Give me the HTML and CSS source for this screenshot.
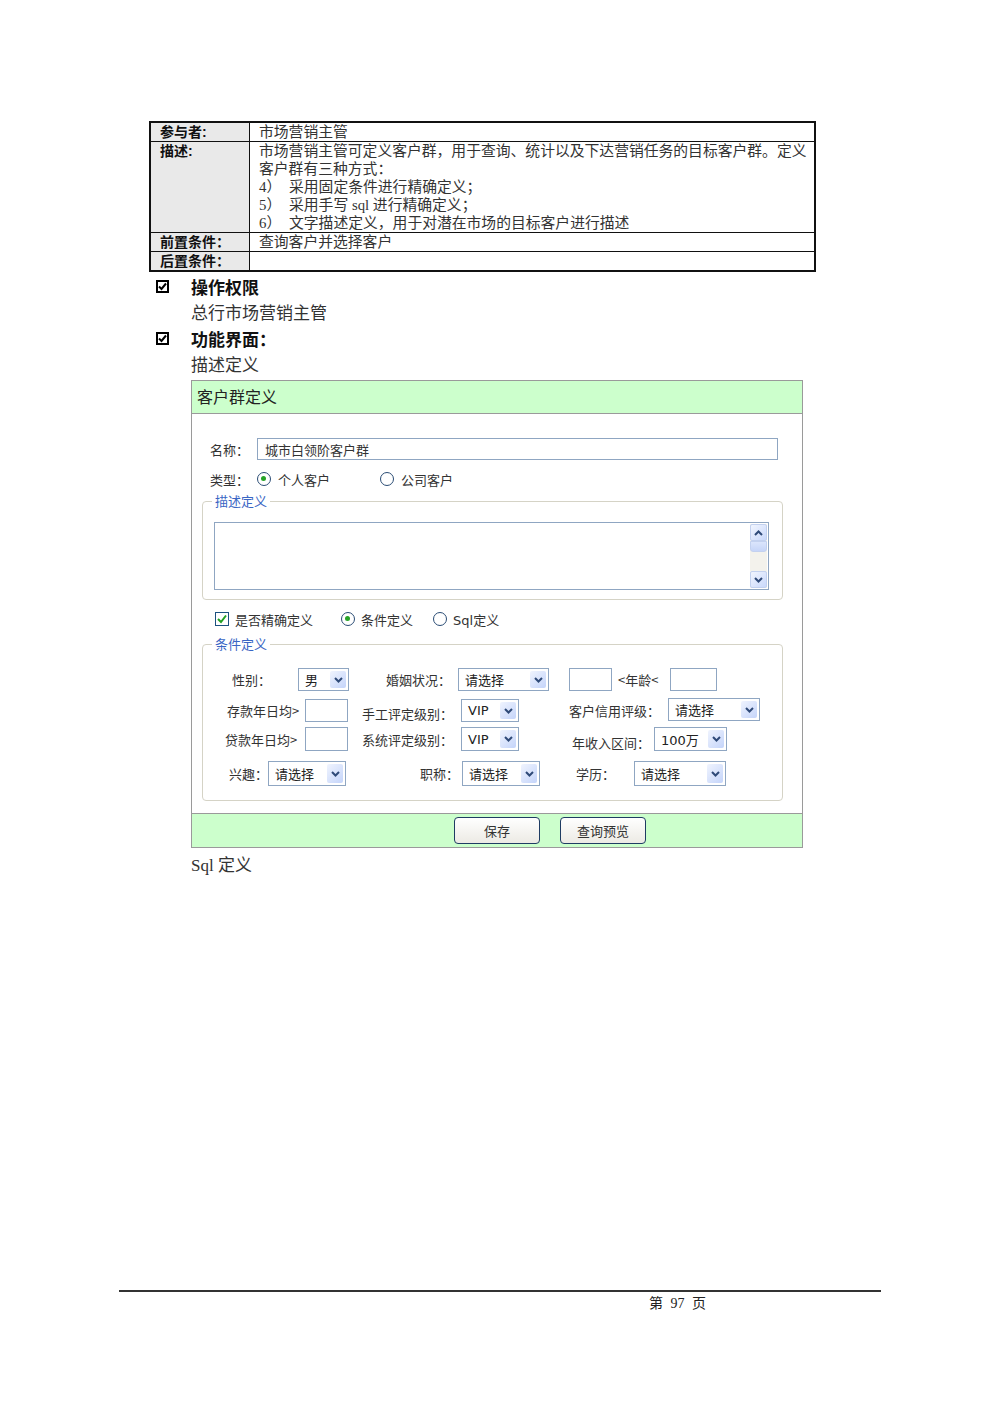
FILE: index.html
```html
<!DOCTYPE html>
<html lang="zh-CN">
<head>
<meta charset="utf-8">
<title>客户群定义</title>
<link rel="stylesheet" href="styles.css">
</head>
<body>
<div class="sheet">
  <main class="content">
    <table class="usecase">
      <colgroup><col class="col-label"><col></colgroup>
      <tr><th>参与者:</th><td>市场营销主管</td></tr>
      <tr><th>描述:</th><td>
        <div>市场营销主管可定义客户群，用于查询、统计以及下达营销任务的目标客户群。定义</div>
        <div>客户群有三种方式：</div>
        <div><span class="num">4）</span>采用固定条件进行精确定义；</div>
        <div><span class="num">5）</span>采用手写 sql 进行精确定义；</div>
        <div><span class="num">6）</span>文字描述定义，用于对潜在市场的目标客户进行描述</div>
      </td></tr>
      <tr><th>前置条件：</th><td>查询客户并选择客户</td></tr>
      <tr><th>后置条件：</th><td></td></tr>
    </table>

    <div class="item first"><svg class="tick" viewBox="0 0 13 13" width="13" height="13"><rect x="1" y="1" width="11" height="11" fill="none" stroke="#000" stroke-width="2"/><path d="M3 6.5 L5.5 9 L10 3.5" fill="none" stroke="#000" stroke-width="2"/></svg><span>操作权限</span></div>
    <p class="para">总行市场营销主管</p>
    <div class="item"><svg class="tick" viewBox="0 0 13 13" width="13" height="13"><rect x="1" y="1" width="11" height="11" fill="none" stroke="#000" stroke-width="2"/><path d="M3 6.5 L5.5 9 L10 3.5" fill="none" stroke="#000" stroke-width="2"/></svg><span>功能界面：</span></div>
    <p class="para">描述定义</p>

    <section class="panel">
      <header class="panel-head">客户群定义</header>
      <div class="panel-body">
        <div class="frow name-row"><span class="flabel">名称：</span><div class="tbox name-input">城市白领阶客户群</div></div>
        <div class="frow type-row"><span class="flabel">类型：</span><span class="radio on"></span><span>个人客户</span><span class="radio gap-opt"></span><span>公司客户</span></div>

        <fieldset class="group desc">
          <legend>描述定义</legend>
          <div class="desc-body">
            <div class="textarea">
              <div class="vscroll">
                <span class="sb-btn"><svg viewBox="0 0 9 6" width="9" height="6"><path d="M1 5 L4.5 1.5 L8 5" fill="none" stroke="#2f4a78" stroke-width="2"/></svg></span>
                <span class="sb-thumb"></span>
                <span class="sb-track"></span>
                <span class="sb-btn"><svg viewBox="0 0 9 6" width="9" height="6"><path d="M1 1 L4.5 4.5 L8 1" fill="none" stroke="#2f4a78" stroke-width="2"/></svg></span>
              </div>
            </div>
          </div>
        </fieldset>

        <div class="frow mode-row">
          <span class="chk"><svg viewBox="0 0 12 12" width="12" height="12"><path d="M2 6 L5 9 L10 2.5" fill="none" stroke="#22a022" stroke-width="2"/></svg></span><span>是否精确定义</span>
          <span class="radio on opt-cond"></span><span>条件定义</span>
          <span class="radio opt-sql"></span><span><span class="latin">Sql</span>定义</span>
        </div>

        <fieldset class="group cond">
          <legend>条件定义</legend>
          <div class="cond-body">
            <div class="crow r1">
              <span class="cl lab-gender">性别：</span>
              <div class="sel w51"><span>男</span><span class="arr"><svg viewBox="0 0 9 6" width="9" height="6"><path d="M1 1 L4.5 4.5 L8 1" fill="none" stroke="#2f4a78" stroke-width="2"/></svg></span></div>
              <span class="cl lab-marital">婚姻状况：</span>
              <div class="sel w91"><span>请选择</span><span class="arr"><svg viewBox="0 0 9 6" width="9" height="6"><path d="M1 1 L4.5 4.5 L8 1" fill="none" stroke="#2f4a78" stroke-width="2"/></svg></span></div>
              <div class="box w43 age-from"></div>
              <span class="cl lab-age">&lt;年龄&lt;</span>
              <div class="box w47"></div>
            </div>
            <div class="crow r2">
              <span class="cl lab-deposit">存款年日均&gt;</span>
              <div class="box w43"></div>
              <span class="cl lab-level lower">手工评定级别：</span>
              <div class="sel w58"><span class="latin">VIP</span><span class="arr"><svg viewBox="0 0 9 6" width="9" height="6"><path d="M1 1 L4.5 4.5 L8 1" fill="none" stroke="#2f4a78" stroke-width="2"/></svg></span></div>
              <span class="cl lab-credit">客户信用评级：</span>
              <div class="sel w92 raise"><span>请选择</span><span class="arr"><svg viewBox="0 0 9 6" width="9" height="6"><path d="M1 1 L4.5 4.5 L8 1" fill="none" stroke="#2f4a78" stroke-width="2"/></svg></span></div>
            </div>
            <div class="crow r3">
              <span class="cl lab-loan">贷款年日均&gt;</span>
              <div class="box w43"></div>
              <span class="cl lab-level">系统评定级别：</span>
              <div class="sel w58"><span class="latin">VIP</span><span class="arr"><svg viewBox="0 0 9 6" width="9" height="6"><path d="M1 1 L4.5 4.5 L8 1" fill="none" stroke="#2f4a78" stroke-width="2"/></svg></span></div>
              <span class="cl lab-income lower">年收入区间：</span>
              <div class="sel w73"><span><span class="latin">100</span>万</span><span class="arr"><svg viewBox="0 0 9 6" width="9" height="6"><path d="M1 1 L4.5 4.5 L8 1" fill="none" stroke="#2f4a78" stroke-width="2"/></svg></span></div>
            </div>
            <div class="crow r4">
              <span class="cl lab-interest">兴趣：</span>
              <div class="sel w78"><span>请选择</span><span class="arr"><svg viewBox="0 0 9 6" width="9" height="6"><path d="M1 1 L4.5 4.5 L8 1" fill="none" stroke="#2f4a78" stroke-width="2"/></svg></span></div>
              <span class="cl lab-title">职称：</span>
              <div class="sel w78"><span>请选择</span><span class="arr"><svg viewBox="0 0 9 6" width="9" height="6"><path d="M1 1 L4.5 4.5 L8 1" fill="none" stroke="#2f4a78" stroke-width="2"/></svg></span></div>
              <span class="cl lab-edu">学历：</span>
              <div class="sel w92"><span>请选择</span><span class="arr"><svg viewBox="0 0 9 6" width="9" height="6"><path d="M1 1 L4.5 4.5 L8 1" fill="none" stroke="#2f4a78" stroke-width="2"/></svg></span></div>
            </div>
          </div>
        </fieldset>
      </div>
      <footer class="panel-foot">
        <button class="btn" type="button">保存</button>
        <button class="btn" type="button">查询预览</button>
      </footer>
    </section>

    <p class="para after-panel">Sql 定义</p>
  </main>

  <footer class="pagefoot">第 97 页</footer>
</div>
</body>
</html>
```

FILE: styles.css
```css
* { box-sizing: border-box; }
html, body { margin: 0; background: #fff; }
body {
  font-family: "Liberation Serif", "Noto Sans CJK SC", serif;
  color: #222;
}
.sheet {
  min-height: 1415px;
  display: flex;
  flex-direction: column;
}
.content { padding: 121px 0 0 149px; }

/* use-case table */
.usecase {
  width: 667px;
  table-layout: fixed;
  border: 2px solid #111;
  border-collapse: separate;
  border-spacing: 0;
  font-size: 14.8px;
  line-height: 18px;
}
.col-label { width: 99px; }
.usecase th, .usecase td {
  padding: 0;
  vertical-align: top;
  text-align: left;
  border-bottom: 1px solid #111;
}
.usecase tr:last-child th, .usecase tr:last-child td { border-bottom: 0; }
.usecase th {
  background: #e9e9e9;
  border-right: 1px solid #111;
  padding-left: 9px;
  font-family: "Liberation Sans", "Noto Sans CJK SC", sans-serif;
  font-weight: 700;
  font-size: 14px;
  color: #111;
}
.usecase td {
  padding-left: 9px;
  color: #333;
  white-space: nowrap;
  overflow: hidden;
}
.num { display: inline-block; width: 30px; }

/* headings */
.item {
  display: flex;
  align-items: center;
  height: 26px;
  margin-left: 7px;
  font-family: "Noto Sans CJK SC", sans-serif;
  font-weight: 700;
  font-size: 17px;
  color: #111;
}
.item.first { margin-top: 1px; }
.tick { flex: none; margin-right: 22px; }
.para {
  margin: 0 0 0 42px;
  padding-top: 3px;
  font-size: 17px;
  line-height: 23px;
  color: #333;
}
.para.after-panel { padding-top: 6px; }

/* panel */
.panel {
  margin: 3px 0 0 42px;
  width: 612px;
  border: 1px solid #9a9a9a;
  font-family: "DejaVu Sans", "Noto Sans CJK SC", sans-serif;
  font-size: 13px;
  color: #333;
}
.panel-head {
  height: 33px;
  background: #ccffcc;
  border-bottom: 1px solid #9a9a9a;
  padding-left: 5px;
  font-family: "Noto Sans CJK SC", sans-serif;
  font-size: 16px;
  line-height: 31px;
  color: #222;
}
.panel-body {
  background: #fff;
  padding: 24px 19px 12px 10px;
}
.frow { display: flex; align-items: center; }
.name-row { padding-left: 8px; height: 22px; }
.flabel { flex: none; width: 47px; }
.tbox {
  height: 22px;
  border: 1px solid #8fa6c2;
  background: #fff;
  display: flex;
  align-items: center;
  padding-left: 7px;
}
.name-input { width: 521px; }
.type-row { padding-left: 8px; height: 18px; margin-top: 10px; }

.radio {
  flex: none;
  position: relative;
  width: 14px;
  height: 14px;
  border-radius: 50%;
  border: 1.5px solid #2a4c74;
  background: #fff;
  margin-right: 7px;
}
.radio.on::after {
  content: "";
  position: absolute;
  left: 3px;
  top: 3px;
  width: 5px;
  height: 5px;
  border-radius: 50%;
  background: #27a327;
}
.gap-opt { margin-left: 50px; }
.latin { font-family: "DejaVu Sans", sans-serif; }

/* group boxes */
.group {
  margin: 5px 0 0;
  padding: 0;
  min-width: 0;
  border: 1px solid #d5d3c6;
  border-radius: 4px;
}
.group legend {
  margin-left: 9px;
  padding: 0 3px;
  color: #3a66c4;
  font-family: "Noto Sans CJK SC", sans-serif;
  font-size: 13px;
  line-height: 16px;
}
.desc-body { padding: 13px 13px 9px 11px; }
.textarea {
  height: 68px;
  border: 1px solid #8fa6c2;
  background: #fff;
  display: flex;
  justify-content: flex-end;
  padding: 1px;
}
.vscroll {
  width: 17px;
  display: flex;
  flex-direction: column;
  background: #f3f2ec;
}
.sb-btn {
  height: 17px;
  display: flex;
  align-items: center;
  justify-content: center;
  border: 1px solid #c3d1ef;
  border-radius: 2px;
  background: linear-gradient(135deg, #f1f5fe, #c9d8fb);
}
.sb-thumb {
  height: 11px;
  border: 1px solid #c3d1ef;
  border-radius: 0 0 3px 3px;
  background: linear-gradient(#dbe5fc, #c6d5f8);
}
.sb-track { flex: 1; }

.mode-row { margin-top: 11px; height: 16px; padding-left: 13px; }
.chk {
  flex: none;
  width: 14px;
  height: 14px;
  border: 1px solid #1c5180;
  background: #fff;
  margin-right: 6px;
  display: flex;
  align-items: center;
  justify-content: center;
}
.opt-cond { margin-left: 28px; margin-right: 6px; }
.opt-sql { margin-left: 20px; margin-right: 6px; }

.cond { margin-top: 9px; }
.cond-body { padding: 16px 0 14px; }
.crow { display: flex; align-items: center; }
.r1 { height: 23px; }
.r2 { height: 23px; margin-top: 8px; }
.r3 { height: 24px; margin-top: 5px; }
.r4 { height: 25px; margin-top: 10px; }
.cl { flex: none; font-family: "Noto Sans CJK SC", sans-serif; font-size: 13px; white-space: nowrap; }
.lower { position: relative; top: 3px; }
.raise { position: relative; top: -1px; }

.lab-gender { margin-left: 29px; width: 66px; }
.lab-marital { margin-left: 37px; width: 72px; }
.lab-age { margin-left: 6px; width: 52px; }
.age-from { margin-left: 20px; }
.lab-deposit { margin-left: 24px; width: 78px; }
.lab-loan { margin-left: 22px; width: 80px; }
.lab-level { margin-left: 14px; width: 99px; }
.lab-credit { margin-left: 50px; width: 99px; }
.lab-income { margin-left: 53px; width: 82px; }
.lab-interest { margin-left: 26px; width: 39px; }
.lab-title { margin-left: 74px; width: 42px; }
.lab-edu { margin-left: 36px; width: 58px; }

.box {
  flex: none;
  height: 100%;
  border: 1px solid #8fa6c2;
  background: #fff;
}
.sel {
  flex: none;
  height: 100%;
  border: 1px solid #8fa6c2;
  background: #fff;
  display: flex;
  align-items: center;
  justify-content: space-between;
  padding: 2px 2px 2px 6px;
  font-family: "Noto Sans CJK SC", sans-serif;
  font-size: 13px;
  color: #222;
}
.sel .arr {
  flex: none;
  width: 16px;
  align-self: stretch;
  display: flex;
  align-items: center;
  justify-content: center;
  border-radius: 2px;
  background: linear-gradient(135deg, #f0f4fe, #c4d4fa);
}
.w43 { width: 43px; }
.w47 { width: 47px; }
.w51 { width: 51px; }
.w58 { width: 58px; }
.w73 { width: 73px; }
.w78 { width: 78px; }
.w91 { width: 91px; }
.w92 { width: 92px; }

.panel-foot {
  background: #ccffcc;
  border-top: 1px solid #9a9a9a;
  padding: 3px 0 3px 262px;
  display: flex;
  gap: 20px;
}
.btn {
  width: 86px;
  height: 27px;
  padding: 0;
  border: 1px solid #1f3c63;
  border-radius: 4px;
  background: linear-gradient(#ffffff, #eceae4);
  font-family: "Noto Sans CJK SC", sans-serif;
  font-size: 13px;
  color: #333;
}

/* page footer */
.pagefoot {
  margin: auto 119px 101px;
  border-top: 2px solid #333;
  padding: 2px 0 0 530px;
  font-size: 14px;
  line-height: 20px;
  color: #222;
  word-spacing: 4px;
}
```
